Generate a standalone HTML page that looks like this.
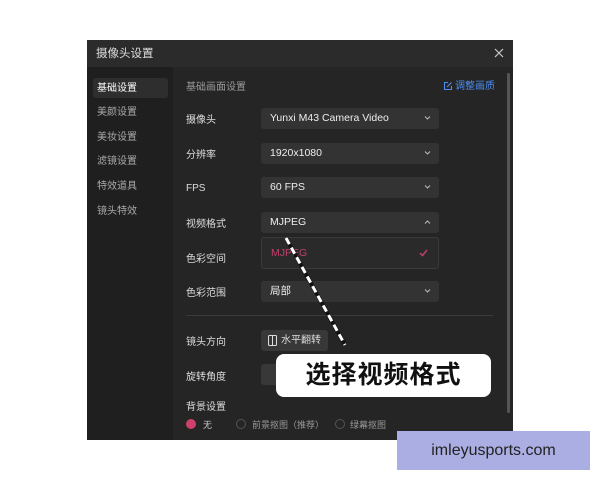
<!DOCTYPE html>
<html><head><meta charset="utf-8"><style>
*{margin:0;padding:0;box-sizing:border-box}
body{width:600px;height:480px;background:#fff;position:relative;overflow:hidden;font-family:"Liberation Sans","Noto Sans CJK SC",sans-serif;}
.a{position:absolute}
.dlg{left:87px;top:40px;width:426px;height:400px;background:#252525}
.tb{left:87px;top:40px;width:426px;height:27px;background:#2b2b2b;color:#ddd;font-size:11.5px;line-height:29px;padding-left:9px}
.side{left:87px;top:67px;width:86px;height:373px;background:#1f1f1f}
.si{font-size:10px;color:#aaa;left:97px;line-height:12px}
.lbl{font-size:10px;color:#ddd;left:186px;line-height:12px}
.sel{left:261px;width:178px;height:21px;background:#333;border-radius:3px;font-size:10.5px;color:#eee;line-height:21px;padding-left:9px}
.chev{position:absolute;right:8px;top:7px}
</style></head><body>
<div class="a dlg"></div>
<div class="a tb">摄像头设置</div>
<svg class="a" style="left:494px;top:48px" width="10" height="10"><path d="M1 1L9 9M9 1L1 9" stroke="#ccc" stroke-width="1.2"/></svg>
<div class="a side"></div>
<div class="a" style="left:93px;top:78px;width:75px;height:20px;background:#2e2e2e;border-radius:3px"></div>
<div class="a si" style="top:83px;color:#fff">基础设置</div>
<div class="a si" style="top:107px">美颜设置</div>
<div class="a si" style="top:132px">美妆设置</div>
<div class="a si" style="top:156px">滤镜设置</div>
<div class="a si" style="top:181px">特效道具</div>
<div class="a si" style="top:206px">镜头特效</div>
<div class="a" style="left:186px;top:82px;font-size:10px;color:#999;line-height:12px">基础画面设置</div>
<svg class="a" style="left:443px;top:81px" width="10" height="10"><path d="M5 1.5H1.5V8.5H8.5V5M4 6L8.5 1.5" stroke="#4b8df0" fill="none" stroke-width="1.1"/></svg>
<div class="a" style="left:455px;top:81px;font-size:10px;color:#4b8df0;line-height:12px">调整画质</div>
<div class="a lbl" style="top:115px">摄像头</div>
<div class="a sel" style="top:108px">Yunxi M43 Camera Video<svg class="chev" width="7" height="6"><path d="M1 1.5L3.5 4L6 1.5" stroke="#bbb" fill="none"/></svg></div>
<div class="a lbl" style="top:150px">分辨率</div>
<div class="a sel" style="top:143px">1920x1080<svg class="chev" width="7" height="6"><path d="M1 1.5L3.5 4L6 1.5" stroke="#bbb" fill="none"/></svg></div>
<div class="a lbl" style="top:183px">FPS</div>
<div class="a sel" style="top:177px">60 FPS<svg class="chev" width="7" height="6"><path d="M1 1.5L3.5 4L6 1.5" stroke="#bbb" fill="none"/></svg></div>
<div class="a lbl" style="top:219px">视频格式</div>
<div class="a sel" style="top:212px">MJPEG<svg class="chev" width="7" height="6"><path d="M1 4.5L3.5 2L6 4.5" stroke="#bbb" fill="none"/></svg></div>
<div class="a" style="left:261px;top:237px;width:178px;height:32px;background:#2a2a2a;border:1px solid #3a3a3a;border-radius:3px;font-size:10.5px;color:#c0406a;line-height:30px;padding-left:9px">MJPEG<svg style="position:absolute;right:10px;top:11px" width="9" height="8"><path d="M1 4L3.5 6.5L8 1" stroke="#c0406a" fill="none" stroke-width="1.5"/></svg></div>
<div class="a lbl" style="top:254px">色彩空间</div>
<div class="a lbl" style="top:288px">色彩范围</div>
<div class="a sel" style="top:281px">局部<svg class="chev" width="7" height="6"><path d="M1 1.5L3.5 4L6 1.5" stroke="#bbb" fill="none"/></svg></div>
<div class="a" style="left:186px;top:315px;width:307px;height:1px;background:#3a3a3a"></div>
<div class="a lbl" style="top:337px">镜头方向</div>
<div class="a" style="left:261px;top:330px;width:67px;height:21px;background:#383838;border-radius:3px;font-size:10px;color:#ddd;line-height:21px;padding-left:20px">水平翻转</div>
<svg class="a" style="left:268px;top:335px" width="9" height="11"><rect x="0.5" y="0.5" width="8" height="10" rx="1" stroke="#ddd" fill="none"/><line x1="4.5" y1="1" x2="4.5" y2="10" stroke="#ddd"/></svg>
<div class="a lbl" style="top:372px">旋转角度</div>
<div class="a" style="left:261px;top:364px;width:30px;height:21px;background:#383838;border-radius:3px"></div>
<div class="a lbl" style="top:402px">背景设置</div>
<div class="a" style="left:186px;top:419px;width:10px;height:10px;border-radius:50%;background:#d0406a"></div>
<div class="a" style="left:203px;top:418px;font-size:9px;color:#ccc">无</div>
<div class="a" style="left:236px;top:419px;width:10px;height:10px;border-radius:50%;border:1px solid #555"></div>
<div class="a" style="left:252px;top:418px;font-size:9px;color:#999">前景抠图（推荐）</div>
<div class="a" style="left:335px;top:419px;width:10px;height:10px;border-radius:50%;border:1px solid #555"></div>
<div class="a" style="left:350px;top:418px;font-size:9px;color:#999">绿幕抠图</div>
<div class="a" style="left:507px;top:73px;width:3px;height:340px;background:#555;border-radius:2px"></div>
<svg class="a" style="left:0;top:0" width="600" height="480"><line x1="286" y1="238" x2="345" y2="345" stroke="#111" stroke-width="4"/><line x1="286" y1="238" x2="345" y2="345" stroke="#fff" stroke-width="3" stroke-dasharray="7 4"/></svg>
<div class="a" style="left:276px;top:354px;width:215px;height:43px;background:#fff;border-radius:8px;font-size:25px;font-weight:bold;color:#111;text-align:center;line-height:43px;letter-spacing:1px">选择视频格式</div>
<div class="a" style="left:397px;top:431px;width:193px;height:39px;background:#aaaee2;font-size:16px;color:#222;text-align:center;line-height:39px">imleyusports.com</div>
</body></html>
